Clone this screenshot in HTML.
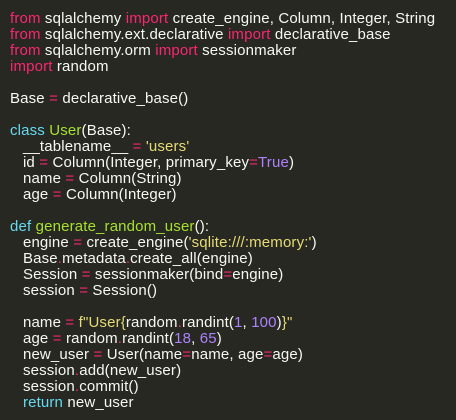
<html><head><style>
body{margin:0;background:#272822;width:456px;height:420px;overflow:hidden}
pre{margin:0;padding:11px 0 0 10px;font-family:"Liberation Sans",sans-serif;font-size:15px;letter-spacing:0.15px;line-height:16px;color:#f8f8f2;white-space:pre}
.k{color:#f92672}.c{color:#66d9ef}.g{color:#a6e22e}.s{color:#e6db74}.n{color:#ae81ff}
</style></head><body><pre><span class="k">from</span> sqlalchemy <span class="k">import</span> create_engine, Column, Integer, String
<span class="k">from</span> sqlalchemy.ext.declarative <span class="k">import</span> declarative_base
<span class="k">from</span> sqlalchemy.orm <span class="k">import</span> sessionmaker
<span class="k">import</span> random

Base <span class="k">=</span> declarative_base()

<span class="c">class</span> <span class="g">User</span>(Base):
   __tablename__ <span class="k">=</span> <span class="s">'users'</span>
   id <span class="k">=</span> Column(Integer, primary_key<span class="k">=</span><span class="n">True</span>)
   name <span class="k">=</span> Column(String)
   age <span class="k">=</span> Column(Integer)

<span class="c">def</span> <span class="g">generate_random_user</span>():
   engine <span class="k">=</span> create_engine(<span class="s">'sqlite:///:memory:'</span>)
   Base<span class="k">.</span>metadata<span class="k">.</span>create_all(engine)
   Session <span class="k">=</span> sessionmaker(bind<span class="k">=</span>engine)
   session <span class="k">=</span> Session()

   name <span class="k">=</span> <span class="s">f"User{</span>random<span class="k">.</span>randint(<span class="n">1</span>, <span class="n">100</span>)<span class="s">}"</span>
   age <span class="k">=</span> random<span class="k">.</span>randint(<span class="n">18</span>, <span class="n">65</span>)
   new_user <span class="k">=</span> User(name<span class="k">=</span>name, age<span class="k">=</span>age)
   session<span class="k">.</span>add(new_user)
   session<span class="k">.</span>commit()
   <span class="c">return</span> new_user</pre></body></html>
